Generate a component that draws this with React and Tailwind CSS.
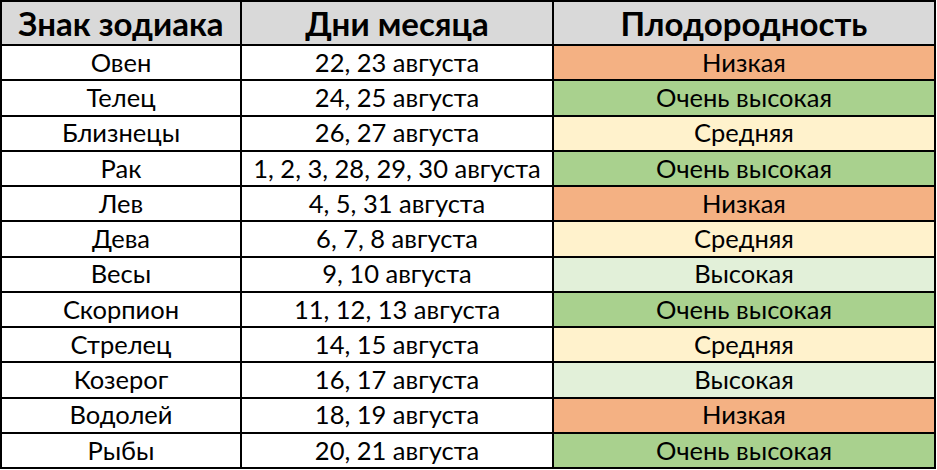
import React from "react";

const rows = [
  ["Овен", "22, 23 августа", "Низкая"],
  ["Телец", "24, 25 августа", "Очень высокая"],
  ["Близнецы", "26, 27 августа", "Средняя"],
  ["Рак", "1, 2, 3, 28, 29, 30 августа", "Очень высокая"],
  ["Лев", "4, 5, 31 августа", "Низкая"],
  ["Дева", "6, 7, 8 августа", "Средняя"],
  ["Весы", "9, 10 августа", "Высокая"],
  ["Скорпион", "11, 12, 13 августа", "Очень высокая"],
  ["Стрелец", "14, 15 августа", "Средняя"],
  ["Козерог", "16, 17 августа", "Высокая"],
  ["Водолей", "18, 19 августа", "Низкая"],
  ["Рыбы", "20, 21 августа", "Очень высокая"],
];

const colors = {
  "Низкая": "bg-[#f4b183]",
  "Очень высокая": "bg-[#a9d18e]",
  "Средняя": "bg-[#fff2cc]",
  "Высокая": "bg-[#e2f0d9]",
};

const font = { fontFamily: "Lato, 'Noto Sans', sans-serif" };

export default function App() {
  return (
    <div className="w-[937px] h-[470px] bg-white" style={font}>
      <div className="w-[936px] h-[469px] bg-black p-[2px] grid grid-cols-[238px_310px_380px] grid-rows-[42px_repeat(12,minmax(0,1fr))] gap-[2px] text-black">
        {["Знак зодиака", "Дни месяца", "Плодородность"].map((h) => (
          <div key={h} className="bg-[#d9d9d9] flex items-center justify-center text-[33px] font-bold leading-none">
            {h}
          </div>
        ))}
        {rows.map((r) => (
          <React.Fragment key={r[0]}>
            <div className="bg-white flex items-center justify-center text-[25.5px] leading-none">{r[0]}</div>
            <div className="bg-white flex items-center justify-center text-[25.5px] leading-none">{r[1]}</div>
            <div className={`${colors[r[2]]} flex items-center justify-center text-[25.5px] leading-none`}>{r[2]}</div>
          </React.Fragment>
        ))}
      </div>
    </div>
  );
}
